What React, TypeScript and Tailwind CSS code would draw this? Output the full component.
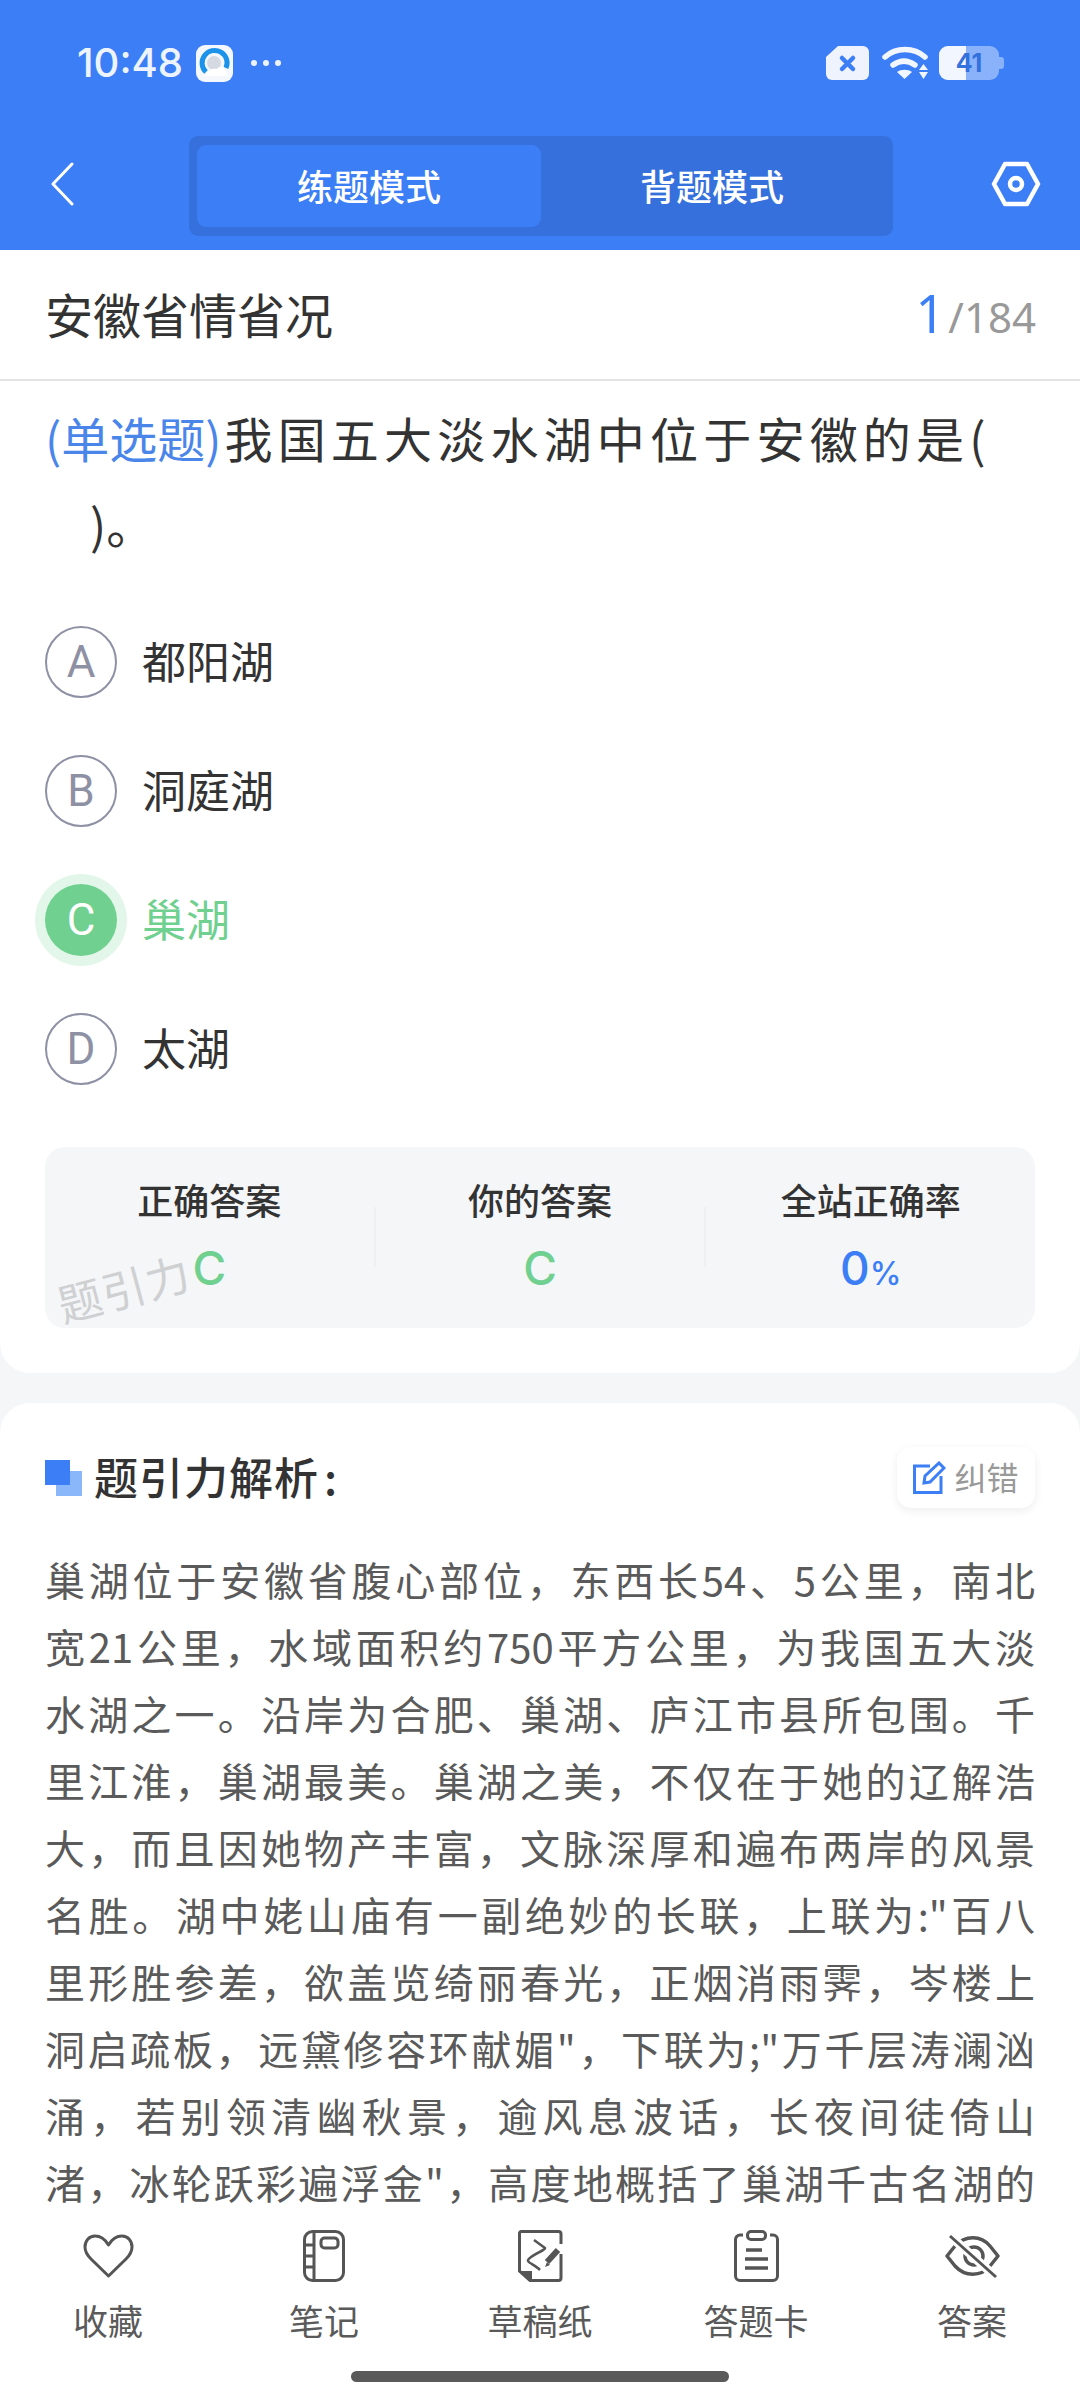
import React from 'react';

const cjk = '"Noto Sans CJK SC", "Noto Sans", sans-serif';

const analysisLines = [
    '巢湖位于安徽省腹心部位，东西长54、5公里，南北',
    '宽21公里，水域面积约750平方公里，为我国五大淡',
    '水湖之一。沿岸为合肥、巢湖、庐江市县所包围。千',
    '里江淮，巢湖最美。巢湖之美，不仅在于她的辽解浩',
    '大，而且因她物产丰富，文脉深厚和遍布两岸的风景',
    '名胜。湖中姥山庙有一副绝妙的长联，上联为:"百八',
    '里形胜参差，欲盖览绮丽春光，正烟消雨霁，岑楼上',
    '洞启疏板，远黛修容环献媚"，下联为;"万千层涛澜汹',
    '涌，若别领清幽秋景，逾风息波话，长夜间徒倚山',
    '渚，冰轮跃彩遍浮金"，高度地概括了巢湖千古名湖的',
];

const options = [
    { key: 'A', text: '都阳湖' },
    { key: 'B', text: '洞庭湖' },
    { key: 'C', text: '巢湖', active: true },
    { key: 'D', text: '太湖' },
];

function StatusBar() {
    return (
        <div className="flex h-[126px] items-center justify-between pl-[77px] pr-[76px] text-white">
            <div className="flex items-center">
                <span className="text-[40px] font-medium leading-none text-[#eef4ff]" style={{ fontFamily: 'Inter, sans-serif' }}>10:48</span>
                <svg width="37" height="37" viewBox="0 0 37 37" className="ml-[13px]">
                    <rect width="37" height="37" rx="9" fill="#f4f7fb" />
                    <path d="M10 27A12.5 12.5 0 1 1 30 23" fill="none" stroke="#1c93ea" strokeWidth="5" />
                    <circle cx="18" cy="18" r="7" fill="#d5dae2" />
                    <path d="M9 31c2-6 8-8 12-7 3-4 9-2 9 3 2 1 2 3 1 4z" fill="#ffffff" />
                </svg>
                <span className="ml-[18px] flex gap-[6px]">
                    <i className="size-[6px] rounded-full bg-[#eef4ff]" />
                    <i className="size-[6px] rounded-full bg-[#eef4ff]" />
                    <i className="size-[6px] rounded-full bg-[#eef4ff]" />
                </span>
            </div>
            <div className="flex items-center">
                <svg width="43" height="34" viewBox="0 0 43 34">
                    <path d="M12 0h25a6 6 0 0 1 6 6v22a6 6 0 0 1-6 6H6a6 6 0 0 1-6-6V11z" fill="#eef3fe" />
                    <path d="M16 12l11 11M27 12L16 23" stroke="#3b7ef6" strokeWidth="4.5" strokeLinecap="round" />
                </svg>
                <svg width="46" height="34" viewBox="0 0 46 34" className="ml-[13px]">
                    <path d="M3 11c11-10 29-10 40 0" fill="none" stroke="#f2f6ff" strokeWidth="5.5" strokeLinecap="round" />
                    <path d="M11 19c7-5 15-5 22 0" fill="none" stroke="#f2f6ff" strokeWidth="5.5" strokeLinecap="round" />
                    <path d="M15 26c4-3 11-3 15 0l-7.500 7z" fill="#f2f6ff" />
                    <path d="M41.500 18l4.500 6h-9zM37 26h9l-4.500 7z" fill="#f2f6ff" />
                </svg>
                <div className="relative ml-[11px] h-[34px] w-[60px] overflow-hidden rounded-[9px] bg-[#8ab2fa]">
                    <div className="h-full w-[27px] bg-[#f2f6ff]" />
                    <span className="absolute inset-0 flex items-center justify-center text-[25px] font-bold leading-none text-[#3471dd]" style={{ fontFamily: 'Inter, sans-serif' }}>41</span>
                </div>
                <i className="h-[12px] w-[5px] rounded-r-[3px] bg-[#8ab2fa]" />
            </div>
        </div>
    );
}

function TopBar() {
    return (
        <div className="flex h-[124px] items-start pl-[50px] pr-[39px] pt-[10px]">
            <svg width="24" height="44" viewBox="0 0 24 44" className="mt-[26px]">
                <path d="M22 2L3 22l19 20" fill="none" stroke="#fff" strokeWidth="3" strokeLinecap="round" strokeLinejoin="round" />
            </svg>
            <div className="ml-[115px] flex h-[100px] w-[704px] rounded-[9px] bg-[#3570dc] px-[8px] py-[9px]">
                <div className="flex w-[344px] items-center justify-center rounded-[9px] bg-[#3b7ef6] pb-[3px] text-[36px] font-medium leading-none text-white">练题模式</div>
                <div className="flex flex-1 items-center justify-center pb-[3px] pr-[2px] text-[36px] font-medium leading-none text-white">背题模式</div>
            </div>
            <svg width="50" height="46" viewBox="0 0 50 46" className="ml-auto mt-[25px]">
                <path d="M14 3h22l11 20-11 20H14L3 23z" fill="none" stroke="#fff" strokeWidth="4.500" strokeLinejoin="round" />
                <circle cx="25" cy="23" r="6" fill="none" stroke="#fff" strokeWidth="4.500" />
            </svg>
        </div>
    );
}

function OptionRow({ option }: { option: (typeof options)[number] }) {
    return (
        <div className="flex h-[129px] items-center">
            {option.active ? (
                <div className="flex size-[72px] shrink-0 items-center justify-center rounded-full bg-[#6fd08f] text-[44px] leading-none text-white ring-[10px] ring-[#e3f6ea]" style={{ fontFamily: 'Roboto, sans-serif' }}>{option.key}</div>
            ) : (
                <div className="flex size-[72px] shrink-0 items-center justify-center rounded-full border-[2px] border-[#8e90a4] text-[44px] leading-none text-[#8e90a4]" style={{ fontFamily: 'Roboto, sans-serif' }}>{option.key}</div>
            )}
            <span className={option.active ? 'mb-[3px] ml-[25px] text-[44px] leading-none text-[#6fd08f]' : 'mb-[3px] ml-[25px] text-[44px] leading-none text-[#333333]'}>{option.text}</span>
        </div>
    );
}

function StatCell({ title, children }: { title: string; children: React.ReactNode }) {
    return (
        <div className="flex flex-1 flex-col items-center pt-[34px]">
            <span className="text-[36px] font-medium leading-none text-[#333333]">{title}</span>
            {children}
        </div>
    );
}

function ActionIcon({ name }: { name: string }) {
    const stroke = '#555555';
    if (name === 'heart') {
        return (
            <svg width="51" height="44" viewBox="0 0 51 44" fill="none" stroke={stroke} strokeWidth="3" strokeLinejoin="round">
                <path d="M25.500 11C22 5 17 2 12 2 6 2 2 7 2 13c0 5 3 9 6 12l17.500 17L43 25c3-3 6-7 6-12 0-6-4-11-10-11-5 0-10 3-13.500 9z" />
            </svg>
        );
    }
    if (name === 'note') {
        return (
            <svg width="42" height="52" viewBox="0 0 42 52" fill="none" stroke={stroke} strokeWidth="3">
                <rect x="1.500" y="1.500" width="39" height="49" rx="8" />
                <path d="M11 2v48M2 15h9M2 26h9M2 37h9" />
                <rect x="18" y="8" width="17" height="10" rx="3.500" />
            </svg>
        );
    }
    if (name === 'draft') {
        return (
            <svg width="45" height="52" viewBox="0 0 45 52" fill="none" stroke={stroke} strokeWidth="3">
                <path d="M43 14V4a2.500 2.500 0 0 0-2.500-2.500h-37A2 2 0 0 0 1.500 4v37L12 50.500h28.500A2.500 2.500 0 0 0 43 48V24" />
                <path d="M2 41h12v10z" fill={stroke} stroke="none" />
                <path d="M16 10l11 8c1 2-18 9-17 13 1 2 8 5 12 9" strokeWidth="2.500" strokeLinejoin="round" />
                <path d="M29 32l11-12" strokeWidth="6" />
                <path d="M27 37l2-5 3 3z" fill={stroke} stroke="none" />
            </svg>
        );
    }
    if (name === 'card') {
        return (
            <svg width="45" height="52" viewBox="0 0 45 52" fill="none" stroke={stroke} strokeWidth="3">
                <path d="M9 5H6a4.500 4.500 0 0 0-4.500 4.500V46A4.500 4.500 0 0 0 6 50.500h33a4.500 4.500 0 0 0 4.500-4.500V9.500A4.500 4.500 0 0 0 39 5h-3" />
                <rect x="13.500" y="1.500" width="18" height="8" rx="3.500" />
                <path d="M12 20h16M11 29h23M11 38h23" strokeWidth="3.500" />
            </svg>
        );
    }
    return (
        <svg width="55" height="45" viewBox="0 0 55 45" fill="none" stroke={stroke} strokeWidth="3.500" strokeLinejoin="round">
            <path d="M2 22l8-10C20 1 36 1 45 12l8 10-8 10C36 43 20 43 10 32z" />
            <circle cx="29" cy="22" r="9" />
            <path d="M5 2l46 41" stroke="#ffffff" strokeWidth="9" />
            <path d="M5 2l46 41" strokeWidth="3" />
        </svg>
    );
}

function ActionItem({ icon, label }: { icon: string; label: string }) {
    return (
        <div className="flex w-[216px] flex-col items-center">
            <div className="flex h-[56px] items-center justify-center"><ActionIcon name={icon} /></div>
            <span className="mt-[18px] text-[35px] leading-none text-[#5a5a5a]">{label}</span>
        </div>
    );
}

// digits stay together, only the hanzi get the justified spacing
function AnalysisLine({ line }: { line: string }) {
    return (
        <div className="text-justify [text-align-last:justify]">
            {line.split(/(\d+)/).map((part, i) => (
                /\d/.test(part) ? <span key={i} className="inline-block">{part}</span> : part
            ))}
        </div>
    );
}

export default function App() {
    return (
        <div className="relative h-[2400px] w-[1080px] overflow-hidden bg-[#f4f6f8]" style={{ fontFamily: cjk }}>
            <div className="bg-[#3b7ef6]">
                <StatusBar />
                <TopBar />
            </div>

            <div className="flex h-[131px] items-center justify-between border-b-[2px] border-[#e4e4e4] bg-white pb-[4px] pl-[45px] pr-[44px]">
                <span className="text-[48px] leading-none text-[#333333]">安徽省情省况</span>
                <span className="flex items-baseline leading-none text-[#999999]" style={{ fontFamily: '"Noto Sans", sans-serif' }}>
                    <span className="ml-[2px] text-[52px] text-[#3b7ef6]">1</span>
                    <span className="ml-[3px] text-[42px]">/184</span>
                </span>
            </div>

            <div className="rounded-b-[30px] bg-white px-[45px] pb-[45px]">
                <div className="pt-[13px] text-[48px] leading-[86px] tracking-[5.2px] text-[#333333]">
                    <span className="mr-[3px] tracking-normal text-[#4a86ea]">(单选题)</span>我国五大淡水湖中位于安徽的是(
                    <br />
                    <span className="pl-[45px] tracking-normal">)。</span>
                </div>
                <div className="mt-[31px] flex flex-col">
                    {options.map(option => <OptionRow key={option.key} option={option} />)}
                </div>
                <div className="relative mt-[34px] flex h-[181px] rounded-[20px] bg-[#f4f6f8]">
                    <StatCell title="正确答案">
                        <span className="mt-[28px] text-[46px] font-medium leading-none text-[#6fd08f]" style={{ fontFamily: 'Inter, sans-serif' }}>C</span>
                    </StatCell>
                    <div className="mt-[60px] h-[60px] w-[2px] bg-[#eef0f2]" />
                    <StatCell title="你的答案">
                        <span className="mt-[28px] text-[46px] font-medium leading-none text-[#6fd08f]" style={{ fontFamily: 'Inter, sans-serif' }}>C</span>
                    </StatCell>
                    <div className="mt-[60px] h-[60px] w-[2px] bg-[#eef0f2]" />
                    <StatCell title="全站正确率">
                        <span className="mt-[28px] font-medium leading-none text-[#3b7ef6]" style={{ fontFamily: 'Inter, sans-serif' }}>
                            <span className="text-[46px]">0</span>
                            <span className="text-[32px]">%</span>
                        </span>
                    </StatCell>
                    <span className="absolute left-[11px] top-[118px] -rotate-[15deg] text-[44px] leading-none tracking-[1px] text-[#cfd0d2]">题引力</span>
                </div>
            </div>

            <div className="mt-[30px] h-[1000px] rounded-t-[30px] bg-white px-[45px]">
                <div className="flex items-center justify-between pt-[44px]">
                    <div className="flex items-center">
                        <svg width="37" height="36" viewBox="0 0 37 36">
                            <rect x="11" y="11" width="26" height="25" fill="#8ab6fa" />
                            <rect width="25" height="25" fill="#3b7ef6" />
                        </svg>
                        <span className="mb-[3px] ml-[12px] text-[44px] font-medium leading-none tracking-[1px] text-[#333333]">题引力解析<span className="ml-[5px]">:</span></span>
                    </div>
                    <div className="flex h-[61px] w-[138px] items-center justify-center rounded-[14px] bg-white shadow-[0_3px_10px_rgba(0,0,0,0.07)]">
                        <svg width="33" height="33" viewBox="0 0 33 33" fill="none" stroke="#3b7ef6" strokeWidth="3">
                            <path d="M17 5H1.500v26.500H28V15" />
                            <path d="M11 22l1-7L26 2l5 5-14 14z" />
                        </svg>
                        <span className="mb-[3px] ml-[8px] text-[32px] leading-none text-[#999999]">纠错</span>
                    </div>
                </div>
                <div className="mt-[38px] text-[40px] leading-[67px] text-[#5a5a5a]">
                    {analysisLines.map(line => <AnalysisLine key={line} line={line} />)}
                </div>
            </div>

            <div className="absolute bottom-0 left-0 h-[190px] w-[1080px] bg-white">
                <div className="flex justify-center pt-[18px]">
                    <ActionItem icon="heart" label="收藏" />
                    <ActionItem icon="note" label="笔记" />
                    <ActionItem icon="draft" label="草稿纸" />
                    <ActionItem icon="card" label="答题卡" />
                    <ActionItem icon="eye" label="答案" />
                </div>
                <div className="absolute bottom-[18px] left-[351px] h-[11px] w-[378px] rounded-full bg-[#5a5a5a]" />
            </div>
        </div>
    );
}
